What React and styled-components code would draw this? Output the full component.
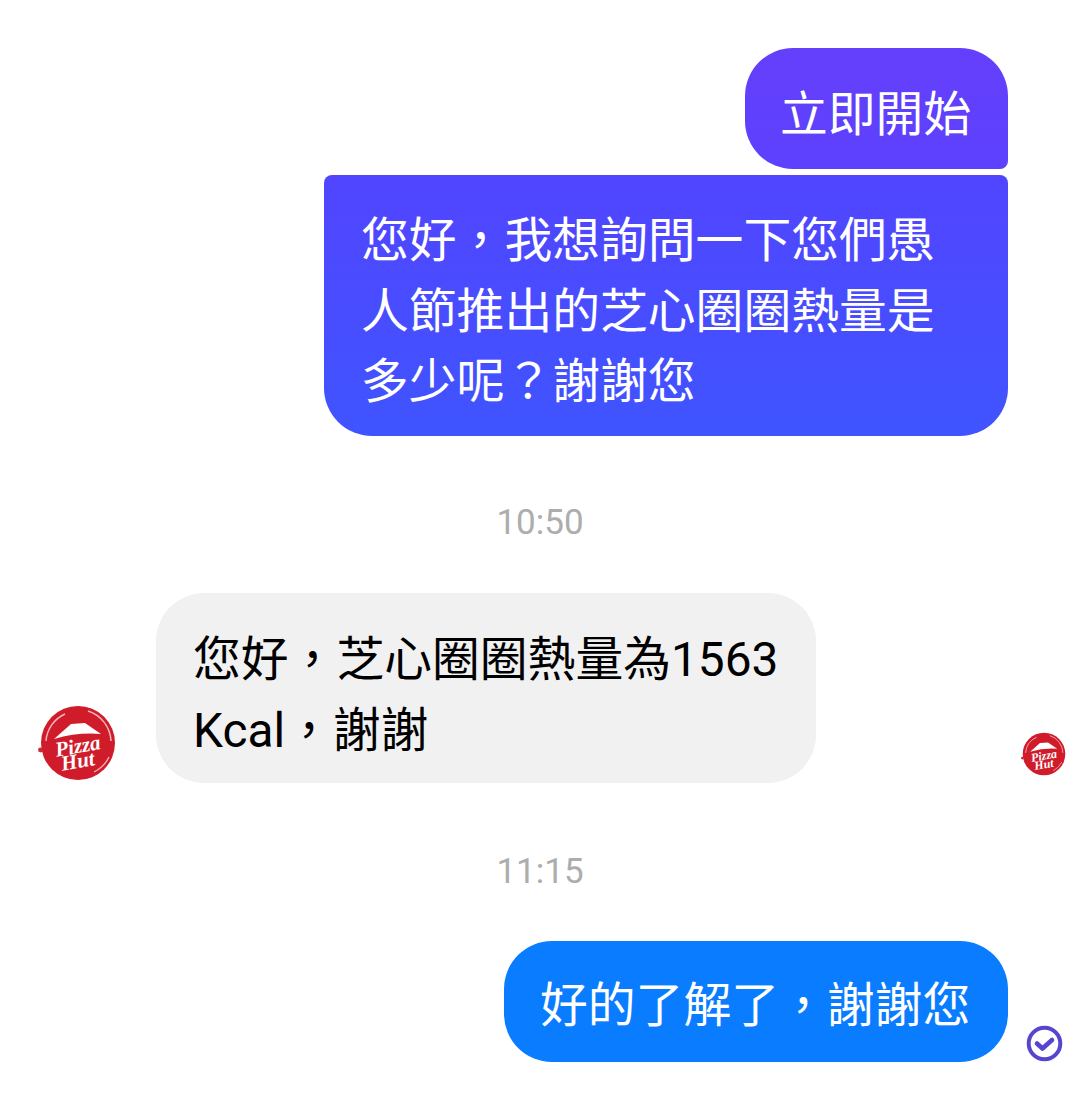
import React from "react";
import styled, { createGlobalStyle } from "styled-components";

const Global = createGlobalStyle`
  html, body { margin: 0; padding: 0; background: #fff; }
  body { font-family: Roboto, "Noto Sans CJK TC", "Liberation Sans", sans-serif; }
`;

const Thread = styled.main`
  width: 1080px;
  height: 1104px;
  padding-top: 48px;
  box-sizing: border-box;
  display: flex;
  flex-direction: column;
  overflow: hidden;
`;

const Row = styled.div`
  display: flex;
  align-items: flex-end;
  justify-content: ${(p) => (p.$mine ? "flex-end" : "flex-start")};
  margin-top: ${(p) => p.$top || 0}px;
  padding-right: ${(p) => (p.$mine ? 72 : 0)}px;
  position: relative;
`;

const Bubble = styled.div`
  box-sizing: border-box;
  width: ${(p) => p.$width}px;
  height: ${(p) => p.$height}px;
  padding: ${(p) => p.$pad || 0}px 20px 0 ${(p) => p.$side}px;
  font-size: 47.8px;
  line-height: 70.5px;
  font-family: Roboto, "Noto Sans CJK TC", sans-serif;
  color: ${(p) => p.$color || "#fff"};
  background: ${(p) => p.$bg};
  border-radius: ${(p) => p.$radius};
  overflow-wrap: anywhere;
`;

const Stamp = styled.div`
  text-align: center;
  font-family: Roboto, sans-serif;
  font-size: 35px;
  line-height: 40px;
  color: #adadad;
  margin-top: ${(p) => p.$top}px;
`;

const AvatarSlot = styled.div`
  width: 156px;
  display: flex;
  justify-content: flex-start;
  padding-left: 38px;
  box-sizing: border-box;
  flex: none;
`;

const SideMark = styled.div`
  position: absolute;
  right: ${(p) => p.$right}px;
  bottom: ${(p) => p.$bottom}px;
  display: flex;
`;

const PizzaHutLogo = ({ size }) => (
  <svg width={size} height={size} viewBox="0 0 80 80" aria-label="Pizza Hut">
    <circle cx="40" cy="40" r="37" fill="#d01b2b" />
    <path d="M8 38 A32 32 0 0 1 27 11" fill="none" stroke="#f5b6ba" strokeWidth="1.5" />
    <path d="M50 8 A33 33 0 0 1 73 38" fill="none" stroke="#f5b6ba" strokeWidth="1.5" />
    <path d="M71 54 A33 33 0 0 1 56 69" fill="none" stroke="#f5b6ba" strokeWidth="1.3" />
    <circle cx="2.5" cy="47" r="2.4" fill="#c92a35" />
    <path d="M16 36 L33 21 L47 20 L63 31 Q40 29 16 36 Z" fill="#fff" />
    <text x="40" y="50" textAnchor="middle" transform="rotate(-10 40 44)" fontFamily="Liberation Serif, serif" fontStyle="italic" fontWeight="700" fontSize="21" fill="#fff">Pizza</text>
    <text x="40" y="65" textAnchor="middle" transform="rotate(-10 40 60)" fontFamily="Liberation Serif, serif" fontStyle="italic" fontWeight="700" fontSize="21" fill="#fff">Hut</text>
  </svg>
);

const ReadCheck = () => (
  <svg width="37" height="37" viewBox="0 0 37 37">
    <circle cx="18.5" cy="18.5" r="15.8" fill="none" stroke="#5545cf" strokeWidth="4" />
    <path d="M11 18.5 L16.5 23.5 L26 15" fill="none" stroke="#5545cf" strokeWidth="4.6" strokeLinecap="round" strokeLinejoin="round" />
  </svg>
);

export default function App() {
  return (
    <>
      <Global />
      <Thread>
        <Row $mine>
          <Bubble
            $width={263}
            $height={121}
            $pad={32}
            $side={35}
            $bg="linear-gradient(180deg,#653ffb,#5c41fe)"
            $radius="48px 48px 8px 48px"
          >
            立即開始
          </Bubble>
        </Row>
        <Row $mine $top={6}>
          <Bubble
            $width={684}
            $height={261}
            $pad={31}
            $side={37}
            $bg="linear-gradient(180deg,#5145ff,#3f54ff)"
            $radius="8px 8px 48px 48px"
          >
            您好，我想詢問一下您們愚
            <br />
            人節推出的芝心圈圈熱量是
            <br />
            多少呢？謝謝您
          </Bubble>
        </Row>
        <Stamp $top={67}>10:50</Stamp>
        <Row $top={50}>
          <AvatarSlot>
            <PizzaHutLogo size={80} />
          </AvatarSlot>
          <Bubble
            $width={660}
            $height={190}
            $pad={32}
            $side={37}
            $color="#000"
            $bg="#f1f1f1"
            $radius="48px"
          >
            您好，芝心圈圈熱量為1563
            <br />
            Kcal，謝謝
          </Bubble>
          <SideMark $right={13} $bottom={6}>
            <PizzaHutLogo size={46} />
          </SideMark>
        </Row>
        <Stamp $top={69}>11:15</Stamp>
        <Row $mine $top={49}>
          <Bubble
            $width={504}
            $height={121}
            $pad={30}
            $side={36}
            $bg="#0a7cff"
            $radius="48px"
          >
            好的了解了，謝謝您
          </Bubble>
          <SideMark $right={17} $bottom={0}>
            <ReadCheck />
          </SideMark>
        </Row>
      </Thread>
    </>
  );
}
